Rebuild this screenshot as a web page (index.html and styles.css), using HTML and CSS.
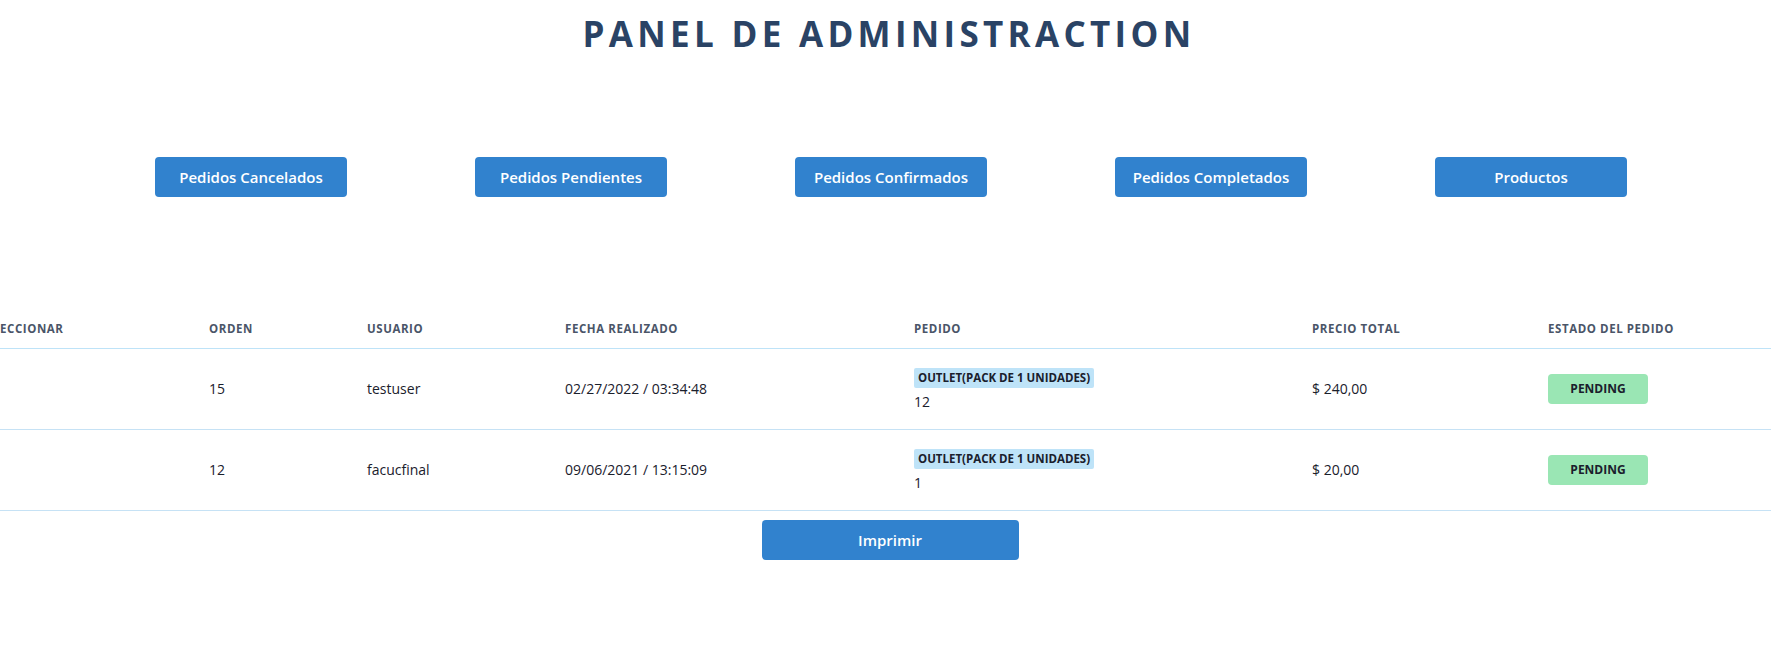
FILE: index.html
```html
<!DOCTYPE html>
<html lang="es">
<head>
<meta charset="utf-8">
<title>Panel de Administraction</title>
<link rel="stylesheet" href="styles.css">
</head>
<body>
<div class="page">
  <h1 class="title">PANEL DE ADMINISTRACTION</h1>
  <nav class="menu">
    <button class="btn">Pedidos Cancelados</button>
    <button class="btn">Pedidos Pendientes</button>
    <button class="btn">Pedidos Confirmados</button>
    <button class="btn">Pedidos Completados</button>
    <button class="btn">Productos</button>
  </nav>
  <div class="table-wrap">
    <table class="orders">
      <colgroup>
        <col class="c-sel"><col class="c-ord"><col class="c-usr"><col class="c-fecha"><col class="c-ped"><col class="c-precio"><col class="c-estado">
      </colgroup>
      <thead>
        <tr>
          <th>Seleccionar</th>
          <th>Orden</th>
          <th>Usuario</th>
          <th>Fecha Realizado</th>
          <th>Pedido</th>
          <th>Precio Total</th>
          <th>Estado del Pedido</th>
        </tr>
      </thead>
      <tbody>
        <tr>
          <td></td>
          <td>15</td>
          <td>testuser</td>
          <td>02/27/2022 / 03:34:48</td>
          <td class="pedido"><span class="item">OUTLET(PACK DE 1 UNIDADES)</span><div class="qty">12</div></td>
          <td>$ 240,00</td>
          <td><span class="status">PENDING</span></td>
        </tr>
        <tr>
          <td></td>
          <td>12</td>
          <td>facucfinal</td>
          <td>09/06/2021 / 13:15:09</td>
          <td class="pedido"><span class="item">OUTLET(PACK DE 1 UNIDADES)</span><div class="qty">1</div></td>
          <td>$ 20,00</td>
          <td><span class="status">PENDING</span></td>
        </tr>
      </tbody>
    </table>
  </div>
  <div class="print-row">
    <button class="btn btn-print">Imprimir</button>
  </div>
</div>
</body>
</html>
```

FILE: styles.css
```css
html, body {
  margin: 0;
  padding: 0;
  overflow: hidden;
  background: #ffffff;
}

body {
  font-family: "Open Sans", "Noto Sans", sans-serif;
  color: #1a202c;
  width: 1778px;
  height: 668px;
}

.page {
  display: flex;
  flex-direction: column;
}

.title {
  margin: 12px 0 0 0;
  text-align: center;
  font-size: 35px;
  line-height: 44px;
  font-weight: 700;
  letter-spacing: 4.3px;
  color: #2a4365;
}

.menu {
  display: flex;
  justify-content: center;
  gap: 128px;
  margin-top: 101px;
  padding-left: 4px;
}

.btn {
  width: 192px;
  height: 40px;
  border: none;
  border-radius: 4px;
  background: #3182ce;
  color: #ffffff;
  font-family: "Open Sans", "Noto Sans", sans-serif;
  font-size: 15px;
  font-weight: 600;
  padding: 0;
  cursor: pointer;
}

.table-wrap {
  margin-top: 112px;
  margin-left: -41px;
}

.orders {
  width: 1812px;
  table-layout: fixed;
  border-collapse: collapse;
}

.c-sel { width: 230px; }
.c-ord { width: 158px; }
.c-usr { width: 198px; }
.c-fecha { width: 349px; }
.c-ped { width: 398px; }
.c-precio { width: 236px; }
.c-estado { width: 243px; }

.orders th {
  padding: 12px 20px 11px;
  text-align: left;
  font-size: 11.5px;
  line-height: 16px;
  font-weight: 700;
  letter-spacing: 0.05em;
  text-transform: uppercase;
  color: #4a5568;
  border-bottom: 1px solid #bee3f8;
  white-space: nowrap;
}

.orders td {
  padding: 20px;
  height: 40px;
  font-size: 14px;
  line-height: 20px;
  color: #1a202c;
  border-bottom: 1px solid #c6e2f5;
  vertical-align: middle;
  white-space: nowrap;
}

.orders td.pedido {
  padding-top: 19px;
  padding-bottom: 17px;
}

.item {
  display: inline-block;
  vertical-align: top;
  background: #bee3f8;
  color: #1a202c;
  font-size: 11.5px;
  line-height: 20px;
  font-weight: 700;
  padding: 0 4px;
  border-radius: 2px;
}

.qty {
  margin-top: 4px;
  line-height: 20px;
}

.status {
  display: inline-block;
  width: 100px;
  height: 30px;
  line-height: 30px;
  text-align: center;
  background: #9ae6b4;
  border-radius: 4px;
  font-size: 12px;
  font-weight: 700;
  color: #1a202c;
}

.print-row {
  display: flex;
  justify-content: center;
  margin-top: 9px;
  padding-left: 2px;
}

.btn-print {
  width: 257px;
  font-size: 15px;
}
```
